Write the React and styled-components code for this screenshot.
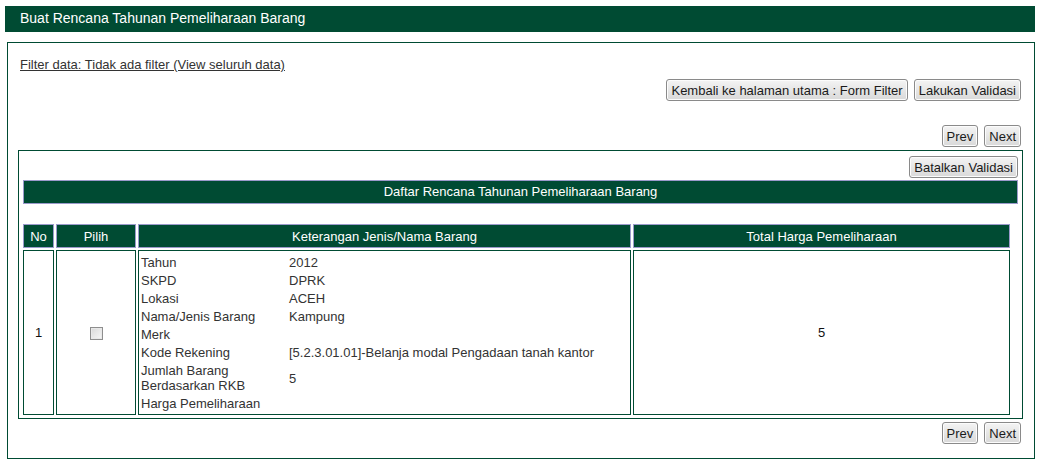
import React from 'react';
import styled, { createGlobalStyle } from 'styled-components';

const GREEN = '#004b33';
const LAVENDER = '#9b9acb';

const rows = [
  { label: 'Tahun', value: '2012' },
  { label: 'SKPD', value: 'DPRK' },
  { label: 'Lokasi', value: 'ACEH' },
  { label: 'Nama/Jenis Barang', value: 'Kampung' },
  { label: 'Merk', value: '' },
  { label: 'Kode Rekening', value: '[5.2.3.01.01]-Belanja modal Pengadaan tanah kantor' },
  { label: 'Jumlah Barang Berdasarkan RKB', value: '5' },
  { label: 'Harga Pemeliharaan', value: '' },
];

export default function App() {
  return (
    <>
      <GlobalStyle />
      <Page>
        <TitleBar>Buat Rencana Tahunan Pemeliharaan Barang</TitleBar>

        <OuterBox>
          <FilterLink href="#">Filter data: Tidak ada filter (View seluruh data)</FilterLink>

          <ButtonRow top={7}>
            <Btn>Kembali ke halaman utama : Form Filter</Btn>
            <Btn>Lakukan Validasi</Btn>
          </ButtonRow>

          <ButtonRow top={24}>
            <Btn>Prev</Btn>
            <Btn>Next</Btn>
          </ButtonRow>

          <InnerBox>
            <ButtonRow top={0} right={0}>
              <Btn>Batalkan Validasi</Btn>
            </ButtonRow>

            <CaptionBar>Daftar Rencana Tahunan Pemeliharaan Barang</CaptionBar>

            <DataTable>
              <thead>
                <tr>
                  <HeadCell width={29}>No</HeadCell>
                  <HeadCell width={78}>Pilih</HeadCell>
                  <HeadCell width={491}>Keterangan Jenis/Nama Barang</HeadCell>
                  <HeadCell>Total Harga Pemeliharaan</HeadCell>
                </tr>
              </thead>
              <tbody>
                <tr>
                  <BodyCell center>1</BodyCell>
                  <BodyCell center>
                    <Check type="checkbox" />
                  </BodyCell>
                  <BodyCell>
                    <InfoTable>
                      <tbody>
                        {rows.map((r) => (
                          <tr key={r.label}>
                            <InfoLabel>{r.label}</InfoLabel>
                            <InfoValue>{r.value}</InfoValue>
                          </tr>
                        ))}
                      </tbody>
                    </InfoTable>
                  </BodyCell>
                  <BodyCell center>5</BodyCell>
                </tr>
              </tbody>
            </DataTable>
          </InnerBox>

          <ButtonRow top={3}>
            <Btn>Prev</Btn>
            <Btn>Next</Btn>
          </ButtonRow>
        </OuterBox>
      </Page>
    </>
  );
}

const GlobalStyle = createGlobalStyle`
  body {
    margin: 0;
    background: #fff;
    font-family: "Liberation Sans", Arial, sans-serif;
    font-size: 13px;
    color: #222;
  }
`;

const Page = styled.div`
  width: 1030px;
  padding: 6px 0 0 5px;
`;

const TitleBar = styled.div`
  height: 26px;
  background: ${GREEN};
  color: #fff;
  font-size: 14px;
  line-height: 25px;
  padding-left: 15px;
`;

const OuterBox = styled.div`
  margin: 10px 0 0 2px;
  border: 1px solid ${GREEN};
  padding: 15px 11px 14px 11px;
  display: flex;
  flex-direction: column;
`;

const FilterLink = styled.a`
  align-self: flex-start;
  margin-left: 1px;
  color: #333;
  line-height: 14px;
  text-decoration: underline;
`;

const ButtonRow = styled.div`
  display: flex;
  justify-content: flex-end;
  gap: 6px;
  margin-top: ${(p) => p.top}px;
  margin-right: ${(p) => (p.right === undefined ? 2 : p.right)}px;
`;

const Btn = styled.button`
  height: 22px;
  padding: 0 4px;
  font-family: "Liberation Sans", Arial, sans-serif;
  font-size: 13px;
  color: #1a1a1a;
  border: 1px solid #8a8a8a;
  border-radius: 3px;
  background: linear-gradient(#f4f4f4, #e6e6e6 50%, #d9d9d9);
  box-shadow: inset 0 0 0 1px #fcfcfc;
`;

const InnerBox = styled.div`
  margin: 3px 0 0 -1px;
  border: 1px solid ${GREEN};
  padding: 5px 4px 1px 4px;
  display: flex;
  flex-direction: column;
`;

const CaptionBar = styled.div`
  margin-top: 2px;
  height: 22px;
  background: ${GREEN};
  border: 1px solid ${LAVENDER};
  color: #fff;
  text-align: center;
  line-height: 22px;
`;

const DataTable = styled.table`
  margin: 18px 0 0 -2px;
  width: 991px;
  border-collapse: separate;
  border-spacing: 2px;
  font-size: 13px;
`;

const HeadCell = styled.th`
  width: ${(p) => (p.width ? `${p.width}px` : 'auto')};
  height: 22px;
  padding: 0;
  background: ${GREEN};
  border: 1px solid ${LAVENDER};
  color: #fff;
  font-weight: normal;
  text-align: center;
`;

const BodyCell = styled.td`
  height: 163px;
  padding: 0;
  border: 1px solid ${GREEN};
  text-align: ${(p) => (p.center ? 'center' : 'left')};
  vertical-align: middle;
  color: #111;
`;

const Check = styled.input`
  appearance: none;
  width: 13px;
  height: 13px;
  margin: 0;
  vertical-align: middle;
  border: 1px solid #8e8e8e;
  background: linear-gradient(135deg, #d8d8d8, #f7f7f7);
  box-shadow: inset 0 0 0 1px #e8e8e8;
`;

const InfoTable = styled.table`
  width: 100%;
  border-collapse: collapse;
  font-size: 13px;
  color: #333;
`;

const InfoLabel = styled.td`
  width: 144px;
  padding: 2px 2px 1px 2px;
  line-height: 15px;
  vertical-align: middle;
`;

const InfoValue = styled.td`
  padding: 2px 2px 1px 2px;
  line-height: 15px;
  vertical-align: middle;
`;
